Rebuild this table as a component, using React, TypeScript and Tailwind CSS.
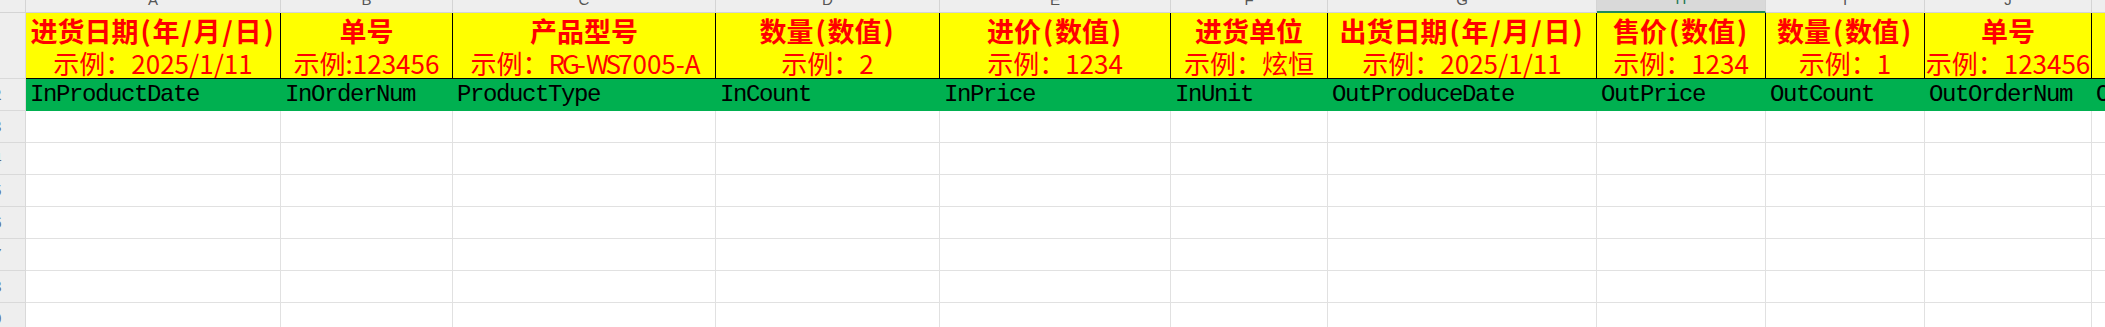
import clsx from 'clsx'

type Col = {
    w: string
    letter: string
    title: string
    sample: string
    field: string
    active?: boolean
}

const cols: Col[] = [
    { w: 'w-[255px]', letter: 'A', title: '进货日期(年/月/日)', sample: '示例：2025/1/11', field: 'InProductDate' },
    { w: 'w-[172px]', letter: 'B', title: '单号', sample: '示例:123456', field: 'InOrderNum' },
    { w: 'w-[263px]', letter: 'C', title: '产品型号', sample: '示例：RG-WS7005-A', field: 'ProductType' },
    { w: 'w-[224px]', letter: 'D', title: '数量(数值)', sample: '示例：2', field: 'InCount' },
    { w: 'w-[231px]', letter: 'E', title: '进价(数值)', sample: '示例：1234', field: 'InPrice' },
    { w: 'w-[157px]', letter: 'F', title: '进货单位', sample: '示例：炫恒', field: 'InUnit' },
    { w: 'w-[269px]', letter: 'G', title: '出货日期(年/月/日)', sample: '示例：2025/1/11', field: 'OutProduceDate' },
    { w: 'w-[169px]', letter: 'H', title: '售价(数值)', sample: '示例：1234', field: 'OutPrice', active: true },
    { w: 'w-[159px]', letter: 'I', title: '数量(数值)', sample: '示例：1', field: 'OutCount' },
    { w: 'w-[167px]', letter: 'J', title: '单号', sample: '示例：123456', field: 'OutOrderNum' },
    { w: 'w-[240px]', letter: 'K', title: '出货单位', sample: '示例：炫恒', field: 'OutUnit' },
]

const emptyRows = [3, 4, 5, 6, 7, 8, 9]

// half-width punctuation in the titles takes a fixed half-em slot, like SimHei
function Title({ text }: { text: string }) {
    return (
        <div className="font-bold text-[27px]">
            {text.split(/([()/])/).map((part, i) =>
                /^[()/]$/.test(part) ? (
                    <span key={i} className="inline-block w-[14px] text-center">
                        {part}
                    </span>
                ) : (
                    <span key={i}>{part}</span>
                )
            )}
        </div>
    )
}

// latin letters are narrower in the original font
function Sample({ text }: { text: string }) {
    return (
        <div className="text-[26px]">
            {text.split(/([A-Za-z]+)/).map((part, i) =>
                /^[A-Za-z]+$/.test(part) ? (
                    <span key={i} className="tracking-[-3px]">
                        {part}
                    </span>
                ) : (
                    <span key={i}>{part}</span>
                )
            )}
        </div>
    )
}

function RowHead({ n, h }: { n?: number; h: string }) {
    return (
        <div
            className={clsx(
                h,
                'w-[56px] shrink-0 flex items-center justify-center border-r border-b border-[#d9d9d9] bg-[#eeeeee] text-[15px] text-[#5b6b80]'
            )}
        >
            {n}
        </div>
    )
}

export default function App() {
    return (
        <div className="w-[2105px] h-[327px] overflow-hidden bg-white font-['Noto_Sans_CJK_SC','Noto_Sans',sans-serif]">
            <div className="-ml-[30px] -mt-[12px] w-max">
                {/* column letters */}
                <div className="flex h-[25px]">
                    <div className="w-[56px] shrink-0 border-r border-b border-[#d4d4d4] bg-[#eeeeee]" />
                    {cols.map((c) => (
                        <div
                            key={c.letter}
                            className={clsx(
                                c.w,
                                "shrink-0 flex items-center justify-center border-r border-[#d4d4d4] font-['Liberation_Sans',sans-serif] text-[15px]",
                                c.active
                                    ? 'bg-[#d9d9d9] border-b-2 border-b-[#1e8a5a] text-[#1e7a55]'
                                    : 'bg-[#eeeeee] border-b text-[#555555]'
                            )}
                        >
                            {c.letter}
                        </div>
                    ))}
                </div>

                {/* row 1: yellow titles */}
                <div className="flex h-[66px]">
                    <RowHead h="h-[66px]" />
                    {cols.map((c) => (
                        <div
                            key={c.letter}
                            className={clsx(
                                c.w,
                                'shrink-0 flex flex-col items-center justify-center pt-[3px] overflow-hidden whitespace-nowrap border-r border-b border-black bg-[#ffff00] text-[#ff0000] leading-[32px]'
                            )}
                        >
                            <Title text={c.title} />
                            <Sample text={c.sample} />
                        </div>
                    ))}
                </div>

                {/* row 2: field names */}
                <div className="flex h-[32px]">
                    <RowHead n={2} h="h-[32px]" />
                    {cols.map((c) => (
                        <div
                            key={c.letter}
                            className={clsx(
                                c.w,
                                "shrink-0 flex items-center pl-[4px] overflow-hidden whitespace-nowrap border-r border-b border-[#00b050] bg-[#00b050] text-black font-['Liberation_Mono',monospace] text-[24px] tracking-[-1.4px]"
                            )}
                        >
                            {c.field}
                        </div>
                    ))}
                </div>

                {emptyRows.map((n) => (
                    <div key={n} className="flex h-[32px]">
                        <RowHead n={n} h="h-[32px]" />
                        {cols.map((c) => (
                            <div key={c.letter} className={clsx(c.w, 'shrink-0 border-r border-b border-[#e1e1e1]')} />
                        ))}
                    </div>
                ))}
            </div>
        </div>
    )
}
